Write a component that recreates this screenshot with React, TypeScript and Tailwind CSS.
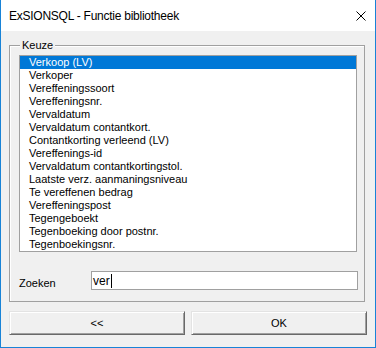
const items = [
  'Verkoop (LV)',
  'Verkoper',
  'Vereffeningssoort',
  'Vereffeningsnr.',
  'Vervaldatum',
  'Vervaldatum contantkort.',
  'Contantkorting verleend (LV)',
  'Vereffenings-id',
  'Vervaldatum contantkortingstol.',
  'Laatste verz. aanmaningsniveau',
  'Te vereffenen bedrag',
  'Vereffeningspost',
  'Tegengeboekt',
  'Tegenboeking door postnr.',
  'Tegenboekingsnr.',
]

function DialogButton({ label }: { label: string }) {
  return (
    <button className="w-[176px] h-[24px] bg-[#f0f0f0] border border-t-[#e3e3e3] border-l-[#e3e3e3] border-b-[#696969] border-r-[#696969] shadow-[inset_1px_1px_0_#ffffff,inset_-1px_-1px_0_#a0a0a0] text-[11px] leading-[13px] text-black">
      {label}
    </button>
  )
}

export default function App() {
  const selected = 0

  return (
    <div className="w-[376px] h-[348px] bg-[#f0f0f0] border-l border-r border-b border-[#1883d7] flex flex-col font-['Liberation_Sans',Arial,sans-serif] text-black">
      {/* Title bar */}
      <div className="h-[31px] bg-white flex items-center justify-between pl-[8px] pr-[9px] shrink-0">
        <span className="text-[12px] leading-[16px] tracking-[-0.25px]">
          ExSIONSQL - Functie bibliotheek
        </span>
        <svg width="10" height="10" viewBox="0 0 10 10" className="mt-[1px]">
          <path d="M0.5 0.5 L9.5 9.5 M9.5 0.5 L0.5 9.5" stroke="#000" strokeWidth="1" />
        </svg>
      </div>

      <div className="pl-[8px] pt-[14px] flex flex-col">
        {/* Group box */}
        <div className="relative w-[356px] h-[257px] border border-[#a0a0a0] shadow-[inset_1px_1px_0_#ffffff] pt-[9px] pl-[9px]">
          <span className="absolute -top-[7px] left-[10px] px-[2px] bg-[#f0f0f0] text-[11px] leading-[13px]">
            Keuze
          </span>

          {/* Listbox */}
          <div className="w-[338px] h-[197px] border border-[#a0a0a0] bg-white overflow-hidden">
            {items.map((item, i) => (
              <div
                key={item}
                className={
                  i === selected
                    ? 'h-[13px] pl-[9px] text-[11px] leading-[13px] bg-[#0078d7] text-white whitespace-nowrap'
                    : 'h-[13px] pl-[9px] text-[11px] leading-[13px] text-black whitespace-nowrap'
                }
              >
                {item}
              </div>
            ))}
          </div>

          {/* Search row */}
          <div className="mt-[19px] flex items-start">
            <span className="w-[72px] pt-[6px] text-[11px] leading-[13px]">Zoeken</span>
            <div className="w-[267px] h-[19px] border border-[#a0a0a0] bg-white flex items-center pl-[1px]">
              <span className="text-[12px] leading-[14px]">ver</span>
              <span className="w-[1px] h-[14px] bg-black ml-[1px]" />
            </div>
          </div>
        </div>

        {/* Buttons */}
        <div className="mt-[9px] flex gap-[6px]">
          <DialogButton label="<<" />
          <DialogButton label="OK" />
        </div>
      </div>
    </div>
  )
}
